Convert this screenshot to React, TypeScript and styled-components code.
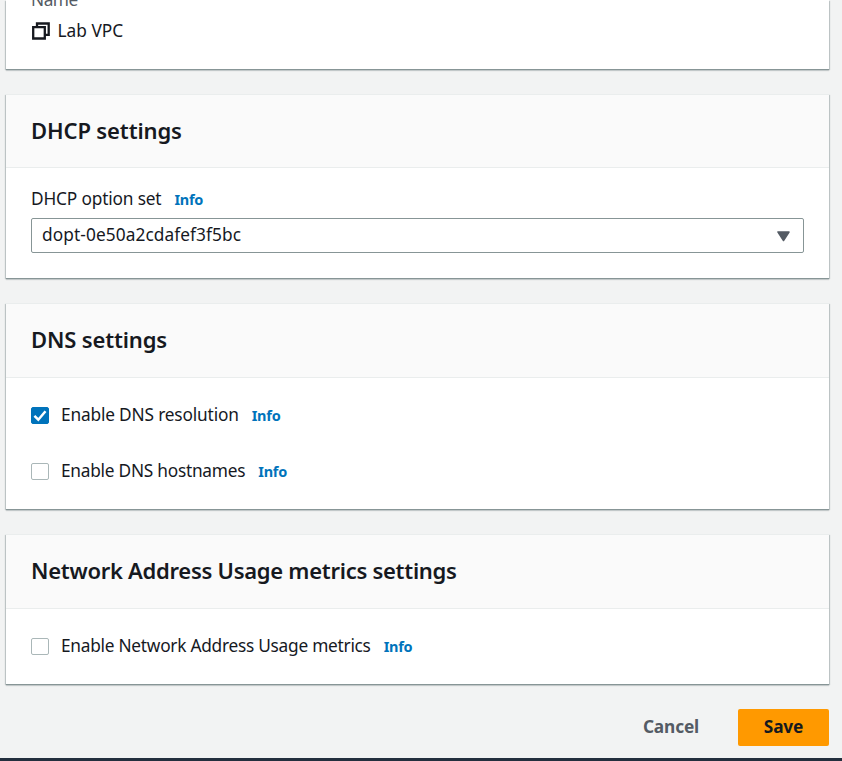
import React from "react";
import styled, { createGlobalStyle } from "styled-components";

const Global = createGlobalStyle`
  * { box-sizing: border-box; }
  html, body { margin: 0; height: 100%; }
  body {
    background: #f2f3f3;
    color: #16191f;
    font-family: "Noto Sans", "Open Sans", sans-serif;
    font-size: 17.3px;
    line-height: 26px;
    overflow: hidden;
  }
`;

const Page = styled.main`
  height: 761px;
  width: 842px;
  overflow: hidden;
  display: flex;
  flex-direction: column;
`;

const Card = styled.section<{ $height: number; $gap: number }>`
  flex: none;
  display: flex;
  flex-direction: column;
  width: 823px;
  height: ${(p) => p.$height}px;
  margin: 0 0 ${(p) => p.$gap}px 6px;
  background: #fff;
  box-shadow: 0 1px 0 0 #879596, 0 2px 1px 0 rgba(0, 28, 36, 0.14),
    1px 1px 1px 0 rgba(0, 28, 36, 0.2), -1px 1px 1px 0 rgba(0, 28, 36, 0.2);
`;

const Header = styled.header<{ $height: number }>`
  flex: none;
  display: flex;
  align-items: center;
  height: ${(p) => p.$height}px;
  padding: 0 25px 3px;
  background: #fafafa;
  border-top: 1px solid #eaeded;
  border-bottom: 1px solid #eaeded;
`;

const Text = styled.span<{ $track?: number }>`
  white-space: nowrap;
  letter-spacing: ${(p) => p.$track ?? 0}px;
`;

const Title = styled.h2<{ $track: number }>`
  margin: 0;
  font-size: 22px;
  line-height: 28px;
  font-weight: 600;
  white-space: nowrap;
  letter-spacing: ${(p) => p.$track}px;
`;

const Summary = styled.div`
  padding-left: 25px;
  margin-top: -13px;
`;

const SummaryLabel = styled.div`
  color: #545b64;
  height: 31px;
  letter-spacing: -0.5px;
`;

const SummaryValue = styled.div`
  display: flex;
  align-items: center;
  gap: 7.5px;
`;

const Field = styled.div`
  display: flex;
  flex-direction: column;
  padding: 18px 25px 0;
`;

const LabelRow = styled.div`
  display: flex;
  align-items: center;
  height: 26px;
  margin-bottom: 6px;
`;

const Info = styled.a`
  margin-left: 13px;
  color: #0073bb;
  font-size: 14.5px;
  font-weight: 700;
  line-height: 20px;
  letter-spacing: -0.25px;
  padding-bottom: 1px;
`;

const Select = styled.div`
  display: flex;
  align-items: center;
  justify-content: space-between;
  width: 773px;
  height: 35px;
  padding: 0 13px 2px 10px;
  border: 1px solid #879596;
  border-radius: 2px;
  svg { margin-top: 3px; }
`;

const Options = styled.div`
  display: flex;
  flex-direction: column;
  gap: 30px;
  padding: 24px 25px 0;
`;

const Option = styled.div`
  display: flex;
  align-items: center;
  height: 26px;
`;

const Box = styled.span<{ $checked?: boolean }>`
  display: flex;
  flex: none;
  width: 18px;
  height: 17.5px;
  margin: 1px 12px 0 0;
  border: 1px solid ${(p) => (p.$checked ? "#0073bb" : "#aab7b8")};
  border-radius: 2px;
  background: ${(p) => (p.$checked ? "#0073bb" : "#fff")};
`;

const Actions = styled.footer`
  flex: none;
  display: flex;
  justify-content: flex-end;
  align-items: center;
  width: 829px;
  height: 37px;
  margin-bottom: 12px;
`;

const Button = styled.button<{ $primary?: boolean }>`
  width: ${(p) => (p.$primary ? 91 : 108)}px;
  height: 37px;
  padding: 0 0 1px;
  margin-left: ${(p) => (p.$primary ? 13 : 0)}px;
  border: 0;
  border-radius: 2px;
  background: ${(p) => (p.$primary ? "#ff9900" : "transparent")};
  color: ${(p) => (p.$primary ? "#16191f" : "#545b64")};
  font: 700 17.3px/26px "Noto Sans", sans-serif;
  letter-spacing: ${(p) => (p.$primary ? -0.2 : -0.15)}px;
`;

const BottomBar = styled.div`
  flex: none;
  height: 3px;
  background: #232f3e;
`;

const CopyIcon = () => (
  <svg width="19" height="18" viewBox="0 0 19 18" fill="none" stroke="#16191f" strokeWidth="2.3">
    <path d="M2.2 5.2h11.6v11.3H2.2z" />
    <path d="M6 5V1.5H17.7V12.8h-4" />
  </svg>
);

const CheckIcon = () => (
  <svg width="16" height="16" viewBox="0 0 16 16" fill="none" stroke="#fff" strokeWidth="2.5">
    <path d="M2.4 7.8l3.9 3.9 7.2-8.4" />
  </svg>
);

const Caret = () => (
  <svg width="13" height="11" viewBox="0 0 13 11">
    <path d="M1 1h11L6.5 9.5z" fill="#545b64" stroke="#545b64" strokeWidth="1.5" strokeLinejoin="round" />
  </svg>
);

type CheckProps = { label: string; track: number; checked?: boolean };

const CheckOption = ({ label, track, checked }: CheckProps) => (
  <Option>
    <Box $checked={checked}>{checked && <CheckIcon />}</Box>
    <Text $track={track}>{label}</Text>
    <Info>Info</Info>
  </Option>
);

export default function App() {
  return (
    <>
      <Global />
      <Page>
        <Card $height={69} $gap={25}>
          <Summary>
            <SummaryLabel>Name</SummaryLabel>
            <SummaryValue>
              <CopyIcon />
              <Text $track={0.02}>Lab VPC</Text>
            </SummaryValue>
          </Summary>
        </Card>

        <Card $height={184} $gap={25}>
          <Header $height={74}>
            <Title $track={-0.13}>DHCP settings</Title>
          </Header>
          <Field>
            <LabelRow>
              <Text $track={-0.17}>DHCP option set</Text>
              <Info>Info</Info>
            </LabelRow>
            <Select>
              <Text $track={0.08}>dopt-0e50a2cdafef3f5bc</Text>
              <Caret />
            </Select>
          </Field>
        </Card>

        <Card $height={206} $gap={25}>
          <Header $height={75}>
            <Title $track={-0.15}>DNS settings</Title>
          </Header>
          <Options>
            <CheckOption label="Enable DNS resolution" track={-0.17} checked />
            <CheckOption label="Enable DNS hostnames" track={-0.25} />
          </Options>
        </Card>

        <Card $height={150} $gap={25}>
          <Header $height={75}>
            <Title $track={-0.28}>Network Address Usage metrics settings</Title>
          </Header>
          <Options>
            <CheckOption label="Enable Network Address Usage metrics" track={-0.26} />
          </Options>
        </Card>

        <Actions>
          <Button>Cancel</Button>
          <Button $primary>Save</Button>
        </Actions>
        <BottomBar />
      </Page>
    </>
  );
}
